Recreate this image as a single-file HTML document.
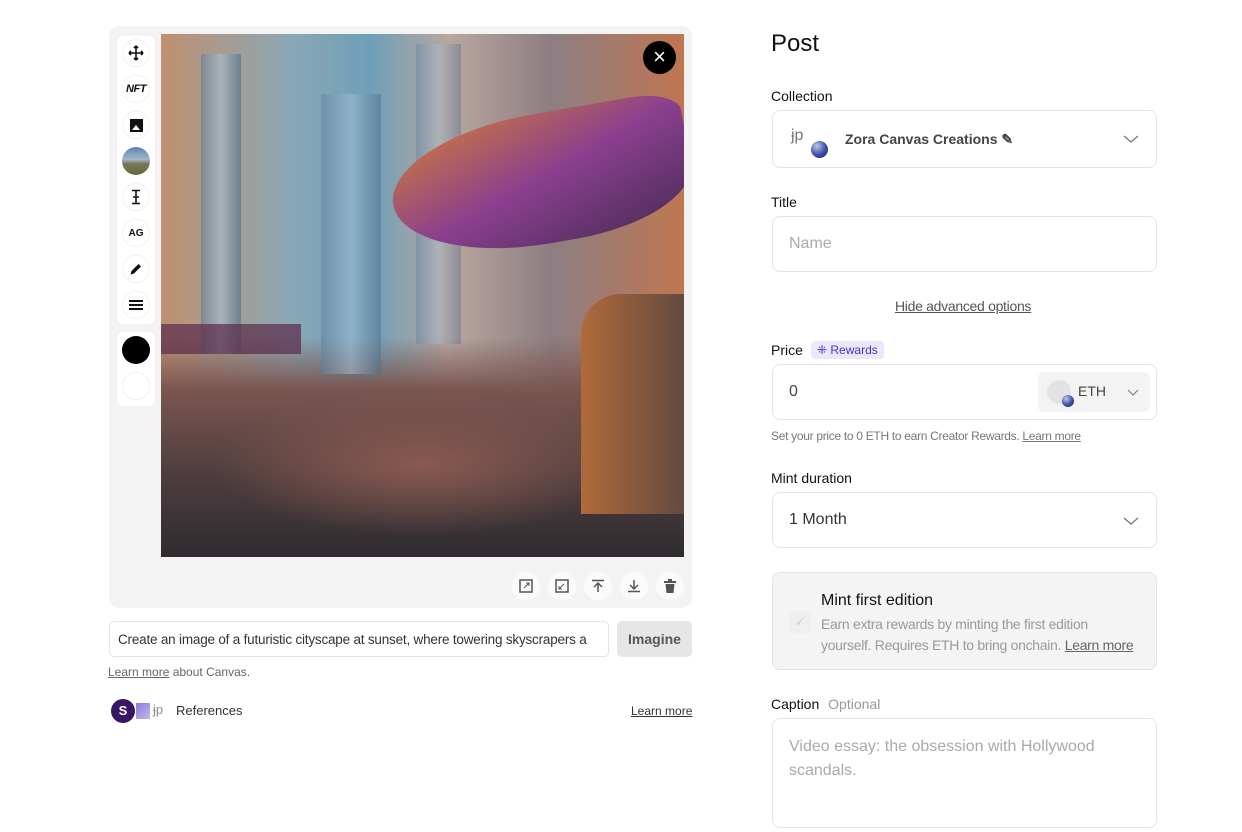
<!DOCTYPE html>
<html><head><meta charset="utf-8"><style>
*{box-sizing:border-box;margin:0;padding:0}
body{width:1242px;height:832px;background:#fff;font-family:"Liberation Sans",sans-serif;color:#111;position:relative;overflow:hidden}
.abs{position:absolute}
.panel{left:109px;top:26px;width:583px;height:582px;background:#f3f3f3;border-radius:10px}
.tb{left:117px;width:38px;background:#fff;border-radius:6px}
.tbi{position:absolute;left:5px;width:28px;height:28px;border-radius:50%;border:1px solid #f1f1f1;display:flex;align-items:center;justify-content:center;font-size:11px;font-weight:bold}
.img{left:161px;top:34px;width:523px;height:523px;overflow:hidden;
background:
radial-gradient(ellipse 260px 90px at 260px 430px,#8a5a50 0%,transparent 80%),
linear-gradient(180deg,transparent 0%,transparent 58%,#7a5650 68%,#4c3c3e 85%,#2e2c30 100%),
linear-gradient(90deg,#c09070 0%,#8aa7b5 25%,#6e9fb8 40%,#b9a7a0 55%,#8d7d82 75%,#c07650 100%),
linear-gradient(180deg,#3c8fa8 0%,#d0a07a 50%,#c07060 100%);}
.bldg{position:absolute;background:linear-gradient(90deg,#5d7d9c,#aac3d6,#4e6a86);}
.bi{position:absolute;top:572px;width:28px;height:28px;border-radius:50%;background:#fafafa;display:flex;align-items:center;justify-content:center}
.lbl{font-size:14px;color:#111}
.box{position:absolute;left:772px;width:385px;border:1px solid #e4e4e4;border-radius:8px;background:#fff}
.ph{color:#aaa;font-size:16px}
</style></head><body>
<div class="abs panel"></div>
<div class="abs tb" style="top:36px;height:288px">
 <div class="tbi" style="top:3px"><svg width="16" height="16" viewBox="0 0 16 16"><path d="M8 1v14M1 8h14M8 1l-2 2M8 1l2 2M8 15l-2-2M8 15l2-2M1 8l2-2M1 8l2 2M15 8l-2-2M15 8l-2 2" stroke="#111" stroke-width="1.6" fill="none"/></svg></div>
 <div class="tbi" style="top:39px;font-style:italic;font-size:11px;letter-spacing:-0.5px">NFT</div>
 <div class="tbi" style="top:75px"><div style="width:13px;height:13px;background:#111;position:relative"><div style="position:absolute;left:2px;bottom:2px;border-left:4px solid transparent;border-right:4px solid transparent;border-bottom:5px solid #fff"></div></div></div>
 <div class="tbi" style="top:111px;background:linear-gradient(180deg,#5d86b4,#a0b9c9 45%,#7d7656 60%,#5e6a3a);border:none"></div>
 <div class="tbi" style="top:147px"><svg width="12" height="16" viewBox="0 0 12 16"><path d="M2 1.5h8M2 14.5h8M6 1.5v13M3 8h6" stroke="#111" stroke-width="1.6" fill="none"/></svg></div>
 <div class="tbi" style="top:183px;font-size:10px">AG</div>
 <div class="tbi" style="top:219px"><svg width="14" height="14" viewBox="0 0 14 14"><path d="M1.5 12.5l1-3.5 7-7 2.5 2.5-7 7z" fill="#111"/></svg></div>
 <div class="tbi" style="top:255px"><svg width="14" height="12"><rect y="1" width="14" height="2" fill="#111"/><rect y="5" width="14" height="2" fill="#111"/><rect y="9" width="14" height="2" fill="#111"/></svg></div>
</div>
<div class="abs tb" style="top:332px;height:74px">
 <div class="tbi" style="top:4px;background:#000;border:none"></div>
 <div class="tbi" style="top:40px"></div>
</div>
<div class="abs img">
 <div class="bldg" style="left:40px;top:20px;width:40px;height:300px;opacity:.6"></div>
 <div class="bldg" style="left:160px;top:60px;width:60px;height:280px;opacity:.5"></div>
 <div class="bldg" style="left:255px;top:10px;width:45px;height:300px;opacity:.4"></div>
 <div style="position:absolute;left:230px;top:80px;width:300px;height:130px;border-radius:60% 20% 50% 60%;background:linear-gradient(160deg,#d07a3a,#8a3f8f 50%,#4a2c55);transform:rotate(-10deg)"></div>
 <div style="position:absolute;left:0;top:290px;width:140px;height:30px;background:#5a2a48;opacity:.7"></div>
 <div style="position:absolute;left:420px;top:260px;width:110px;height:220px;border-radius:40px 0 0 0;background:linear-gradient(90deg,#b06a3a,#5d4840)"></div>
 <div style="position:absolute;left:482px;top:7px;width:33px;height:33px;border-radius:50%;background:#000;color:#fff;font-size:22px;line-height:32px;text-align:center">×</div>
</div>
<div class="bi" style="left:512px"><svg width="14" height="14"><rect x="1" y="1" width="12" height="12" fill="none" stroke="#555" stroke-width="1.5"/><path d="M5 9l5-5M7 4h3v3" stroke="#555" fill="none"/></svg></div>
<div class="bi" style="left:548px"><svg width="14" height="14"><rect x="1" y="1" width="12" height="12" fill="none" stroke="#555" stroke-width="1.5"/><path d="M9 5l-5 5M4 7v3h3" stroke="#555" fill="none"/></svg></div>
<div class="bi" style="left:584px"><svg width="14" height="14"><path d="M1 1.5h12M7 4v9M3 8l4-4 4 4" stroke="#555" stroke-width="1.5" fill="none"/></svg></div>
<div class="bi" style="left:620px"><svg width="14" height="14"><path d="M1 12.5h12M7 1v9M3 6l4 4 4-4" stroke="#555" stroke-width="1.5" fill="none"/></svg></div>
<div class="bi" style="left:656px"><svg width="14" height="14"><rect x="1" y="2" width="12" height="2" fill="#555"/><rect x="5" y="0" width="4" height="2" fill="#555"/><path d="M2.5 5h9l-1 9h-7z" fill="#555"/></svg></div>

<div class="abs" style="left:109px;top:621px;width:500px;height:36px;border:1px solid #e4e4e4;border-radius:5px;padding:10px 8px;font-size:13.5px;color:#333;white-space:nowrap;overflow:hidden;letter-spacing:-0.2px">Create an image of a futuristic cityscape at sunset, where towering skyscrapers a</div>
<div class="abs" style="left:617px;top:621px;width:75px;height:36px;background:#e6e6e6;border-radius:5px;font-size:14px;font-weight:bold;color:#555;text-align:center;line-height:36px">Imagine</div>
<div class="abs" style="left:108px;top:665px;font-size:12px;color:#666"><u>Learn more</u> about Canvas.</div>
<div class="abs" style="left:111px;top:699px;width:24px;height:24px;border-radius:50%;background:#3a1565;color:#fff;font-size:13px;font-weight:bold;text-align:center;line-height:24px">S</div>
<div class="abs" style="left:136px;top:703px;width:14px;height:16px;background:linear-gradient(135deg,#8b7ad8,#c4b8ee)"></div>
<div class="abs" style="left:153px;top:702px;font-size:13px;color:#888">ɉp</div>
<div class="abs" style="left:176px;top:703px;font-size:13px;color:#333">References</div>
<div class="abs" style="left:631px;top:704px;font-size:12px;color:#333;text-decoration:underline">Learn more</div>

<div class="abs" style="left:771px;top:30px;font-size:24px">Post</div>
<div class="abs lbl" style="left:771px;top:88px">Collection</div>
<div class="box" style="top:110px;height:58px">
 <div class="abs" style="left:18px;top:16px;font-size:16px;color:#777">ɉp</div>
 <div class="abs" style="left:38px;top:30px;width:17px;height:17px;border-radius:50%;background:radial-gradient(circle at 35% 30%,#bcd 0%,#4655b5 50%,#151a3a 100%)"></div>
 <div class="abs" style="left:72px;top:20px;font-size:14px;font-weight:bold;color:#444">Zora Canvas Creations ✎</div>
 <svg class="abs" style="left:350px;top:23px" width="16" height="10"><path d="M1 2l7 6 7-6" stroke="#777" fill="none" stroke-width="1.3"/></svg>
</div>
<div class="abs lbl" style="left:771px;top:194px">Title</div>
<div class="box" style="top:216px;height:56px"><div class="abs ph" style="left:16px;top:18px">Name</div></div>
<div class="abs" style="left:895px;top:298px;font-size:14px;color:#555;text-decoration:underline;letter-spacing:-0.3px">Hide advanced options</div>
<div class="abs lbl" style="left:771px;top:342px">Price</div>
<div class="abs" style="left:811px;top:341px;height:18px;padding:0 6px;background:#ece8fb;border-radius:4px;font-size:12px;color:#4a30c0;line-height:18px">⁜ Rewards</div>
<div class="box" style="top:364px;height:56px">
 <div class="abs" style="left:16px;top:18px;font-size:16px;color:#444">0</div>
 <div class="abs" style="left:265px;top:7px;width:112px;height:40px;background:#f3f3f3;border-radius:6px">
  <div class="abs" style="left:9px;top:8px;width:24px;height:24px;border-radius:50%;background:#e2e2e2"></div>
  <div class="abs" style="left:24px;top:23px;width:12px;height:12px;border-radius:50%;background:radial-gradient(circle at 35% 30%,#bcd,#4655b5 50%,#151a3a)"></div>
  <div class="abs" style="left:40px;top:11px;font-size:14px;color:#444">ETH</div>
  <svg class="abs" style="left:89px;top:17px" width="12" height="8"><path d="M1 1l5 5 5-5" stroke="#777" fill="none"/></svg>
 </div>
</div>
<div class="abs" style="left:771px;top:429px;font-size:12px;color:#777;letter-spacing:-0.3px">Set your price to 0 ETH to earn Creator Rewards. <u>Learn more</u></div>
<div class="abs lbl" style="left:771px;top:470px">Mint duration</div>
<div class="box" style="top:492px;height:56px">
 <div class="abs" style="left:16px;top:18px;font-size:16px;color:#333">1 Month</div>
 <svg class="abs" style="left:350px;top:23px" width="16" height="10"><path d="M1 2l7 6 7-6" stroke="#777" fill="none" stroke-width="1.3"/></svg>
</div>
<div class="box" style="top:572px;height:98px;background:#f4f4f4">
 <div class="abs" style="left:16px;top:38px;width:22px;height:22px;border-radius:5px;background:#efefef;color:#ccc;font-size:12px;text-align:center;line-height:22px">✓</div>
 <div class="abs" style="left:48px;top:19px;font-size:16px;color:#111">Mint first edition</div>
 <div class="abs" style="left:48px;top:41px;font-size:14px;color:#999;line-height:21px;white-space:nowrap;letter-spacing:-0.3px">Earn extra rewards by minting the first edition<br>yourself. Requires ETH to bring onchain. <u style="color:#666">Learn more</u></div>
</div>
<div class="abs lbl" style="left:771px;top:696px">Caption <span style="color:#999;margin-left:5px">Optional</span></div>
<div class="box" style="top:718px;height:110px"><div class="abs ph" style="left:16px;top:16px;line-height:24px;width:330px">Video essay: the obsession with Hollywood scandals.</div></div>
</body></html>
